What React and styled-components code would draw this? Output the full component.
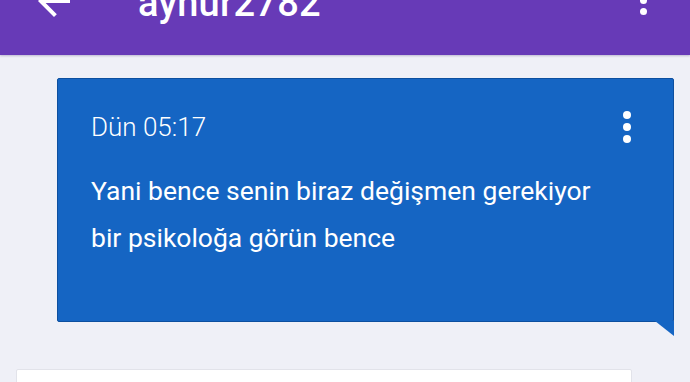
import React from 'react';
import styled, { createGlobalStyle } from 'styled-components';

const GlobalStyle = createGlobalStyle`
  html, body {
    margin: 0;
    padding: 0;
    background: #eff0f7;
    font-family: Roboto, "Noto Sans", sans-serif;
    overflow: hidden;
  }
`;

const Screen = styled.div`
  width: 690px;
  height: 382px;
  overflow: hidden;
  display: flex;
  flex-direction: column;
`;

const Toolbar = styled.header`
  height: 110px;
  margin-top: -55px;
  flex-shrink: 0;
  background: #673ab7;
  box-shadow: 0 1px 2px rgba(40, 20, 90, 0.25);
  display: flex;
  align-items: center;
  padding: 0 30px 0 30px;
  color: #fff;
  position: relative;
  z-index: 1;
`;

const IconButton = styled.button`
  border: 0;
  background: none;
  padding: 0;
  color: #fff;
  width: ${p => p.$w}px;
  height: ${p => p.$w}px;
  margin-top: 2px;
  display: flex;
  align-items: center;
  justify-content: center;
`;

const Title = styled.h1`
  margin: 0 0 0 60px;
  flex: 1;
  font-size: 38px;
  font-weight: 500;
  letter-spacing: 0.2px;
  line-height: 40px;
  padding-top: 6px;
`;

const Thread = styled.main`
  flex: 1;
  padding: 23px 16px 0 16px;
  display: flex;
  flex-direction: column;
  gap: 47px;
`;

const Bubble = styled.div`
  position: relative;
  margin-left: ${p => (p.$mine ? 41 : 0)}px;
  margin-right: ${p => (p.$mine ? 0 : 42)}px;
  height: ${p => p.$h}px;
  flex-shrink: 0;
  box-sizing: border-box;
  background: ${p => (p.$mine ? '#1565c3' : '#ffffff')};
  border: 1px solid ${p => (p.$mine ? '#0d4f9f' : '#e2e3ea')};
  border-radius: 2px;
  color: #fff;
  padding: 28px 33px 0 33px;

  ${p => p.$mine && `
    &::after {
      content: '';
      position: absolute;
      right: -1px;
      bottom: -15px;
      width: 19px;
      height: 15px;
      background: #1565c3;
      clip-path: polygon(0 0, 100% 0, 100% 100%);
    }
  `}
`;

const MetaRow = styled.div`
  display: flex;
  align-items: center;
  justify-content: space-between;
`;

const Time = styled.span`
  font-size: 26px;
  font-weight: 300;
  line-height: 40px;
`;

const Kebab = styled.span`
  display: flex;
  flex-direction: column;
  gap: ${p => p.$gap}px;
  margin-right: ${p => p.$mr || 0}px;
  i {
    display: block;
    width: ${p => p.$dot}px;
    height: ${p => p.$dot}px;
    border-radius: 50%;
    background: #fff;
  }
`;

const Message = styled.p`
  margin: 20px 0 0 0;
  font-size: 26.5px;
  font-weight: 400;
  line-height: 47px;
`;

function Dots({ dot, gap, mr }) {
  return (
    <Kebab $dot={dot} $gap={gap} $mr={mr}>
      <i />
      <i />
      <i />
    </Kebab>
  );
}

export default function App() {
  return (
    <Screen>
      <GlobalStyle />
      <Toolbar>
        <IconButton $w={48} aria-label="Geri">
          <svg width="48" height="48" viewBox="0 0 24 24" fill="#fff">
            <path d="M20 11H7.83l5.59-5.59L12 4l-8 8 8 8 1.41-1.41L7.83 13H20v-2z" />
          </svg>
        </IconButton>
        <Title>aynur2782</Title>
        <Dots dot={7} gap={4} mr={13} />
      </Toolbar>
      <Thread>
        <Bubble $mine $h={244}>
          <MetaRow>
            <Time>Dün 05:17</Time>
            <Dots dot={8} gap={4} mr={9} />
          </MetaRow>
          <Message>
            Yani bence senin biraz değişmen gerekiyor
            <br />
            bir psikoloğa görün bence
          </Message>
        </Bubble>
        <Bubble $h={80} />
      </Thread>
    </Screen>
  );
}
